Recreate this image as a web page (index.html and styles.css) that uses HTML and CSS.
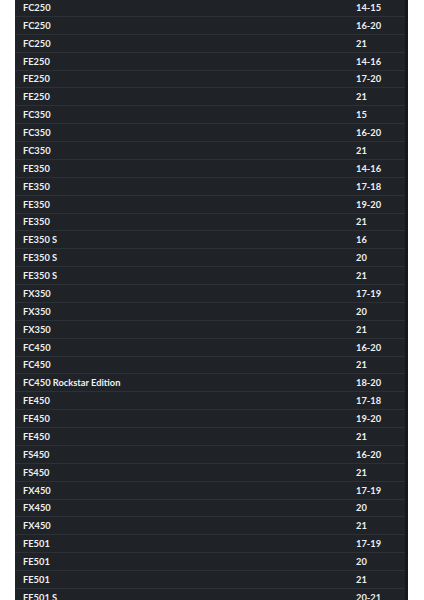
FILE: index.html
```html
<!DOCTYPE html>
<html>
<head>
<meta charset="utf-8">
<link rel="stylesheet" href="styles.css">
</head>
<body>
<div class="panel">
  <div class="table">
    <div class="row"><span class="model">FC250</span><span class="year">14-15</span></div>
    <div class="row"><span class="model">FC250</span><span class="year">16-20</span></div>
    <div class="row"><span class="model">FC250</span><span class="year">21</span></div>
    <div class="row"><span class="model">FE250</span><span class="year">14-16</span></div>
    <div class="row"><span class="model">FE250</span><span class="year">17-20</span></div>
    <div class="row"><span class="model">FE250</span><span class="year">21</span></div>
    <div class="row"><span class="model">FC350</span><span class="year">15</span></div>
    <div class="row"><span class="model">FC350</span><span class="year">16-20</span></div>
    <div class="row"><span class="model">FC350</span><span class="year">21</span></div>
    <div class="row"><span class="model">FE350</span><span class="year">14-16</span></div>
    <div class="row"><span class="model">FE350</span><span class="year">17-18</span></div>
    <div class="row"><span class="model">FE350</span><span class="year">19-20</span></div>
    <div class="row"><span class="model">FE350</span><span class="year">21</span></div>
    <div class="row"><span class="model">FE350 S</span><span class="year">16</span></div>
    <div class="row"><span class="model">FE350 S</span><span class="year">20</span></div>
    <div class="row"><span class="model">FE350 S</span><span class="year">21</span></div>
    <div class="row"><span class="model">FX350</span><span class="year">17-19</span></div>
    <div class="row"><span class="model">FX350</span><span class="year">20</span></div>
    <div class="row"><span class="model">FX350</span><span class="year">21</span></div>
    <div class="row"><span class="model">FC450</span><span class="year">16-20</span></div>
    <div class="row"><span class="model">FC450</span><span class="year">21</span></div>
    <div class="row"><span class="model">FC450 Rockstar Edition</span><span class="year">18-20</span></div>
    <div class="row"><span class="model">FE450</span><span class="year">17-18</span></div>
    <div class="row"><span class="model">FE450</span><span class="year">19-20</span></div>
    <div class="row"><span class="model">FE450</span><span class="year">21</span></div>
    <div class="row"><span class="model">FS450</span><span class="year">16-20</span></div>
    <div class="row"><span class="model">FS450</span><span class="year">21</span></div>
    <div class="row"><span class="model">FX450</span><span class="year">17-19</span></div>
    <div class="row"><span class="model">FX450</span><span class="year">20</span></div>
    <div class="row"><span class="model">FX450</span><span class="year">21</span></div>
    <div class="row"><span class="model">FE501</span><span class="year">17-19</span></div>
    <div class="row"><span class="model">FE501</span><span class="year">20</span></div>
    <div class="row"><span class="model">FE501</span><span class="year">21</span></div>
    <div class="row"><span class="model">FE501 S</span><span class="year">20-21</span></div>
  </div>
</div>
</body>
</html>
```
FILE: styles.css
```css
html, body {
  margin: 0;
  padding: 0;
  background: #ffffff;
  height: 600px;
  overflow: hidden;
}

.panel {
  margin-left: 15px;
  width: 390px;
  margin-top: -1px;
  background: #1f2226;
  border-right: 3px solid #16191c;
}

.table {
  display: flex;
  flex-direction: column;
}

.row {
  display: grid;
  grid-template-columns: 341px 1fr;
  height: 16.88px;
  border-bottom: 1px solid #2d3136;
  align-items: center;
  font-family: Lato, "Liberation Sans", sans-serif;
  font-weight: 700;
  font-size: 9.3px;
  color: #eef0f2;
}

.model {
  padding-left: 8px;
  white-space: nowrap;
}
```
